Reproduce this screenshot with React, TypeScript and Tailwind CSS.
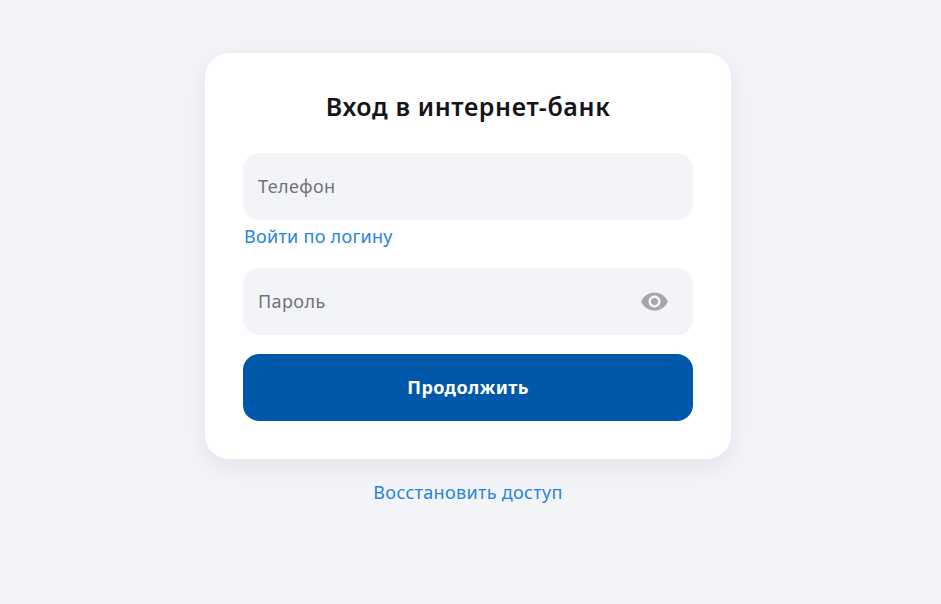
import { MdVisibility } from 'react-icons/md';

export default function App() {
  return (
    <div className="min-h-[604px] bg-[#f3f4f8] flex flex-col items-center pt-[53px] pr-[5px] font-['Noto_Sans',sans-serif]">
      <div className="w-[526px] bg-white rounded-[24px] px-[38px] pt-[36px] pb-[38px] shadow-[0_8px_24px_rgba(30,40,80,0.08)]">
        <h1 className="text-[25px] leading-[34px] tracking-[0.62px] font-semibold text-center text-[#14141a] mb-[30px]">
          Вход в интернет-банк
        </h1>
        <div className="h-[67px] bg-[#f3f4f8] rounded-[16px] flex items-center px-[15px] text-[18px] tracking-[0.4px] text-[#72727e]">
          Телефон
        </div>
        <a className="block mt-[4px] ml-[1px] text-[18px] leading-[24px] tracking-[0.28px] text-[#2485e0]">Войти по логину</a>
        <div className="mt-[20px] h-[67px] bg-[#f3f4f8] rounded-[16px] flex items-center justify-between pl-[15px] pr-[24px] text-[18px] tracking-[0.4px] text-[#72727e]">
          <span>Пароль</span>
          <MdVisibility className="w-[29px] h-[29px] -mt-[1px] text-[#a5a5ae]" />
        </div>
        <button className="mt-[19px] w-full h-[67px] bg-[#0058ab] rounded-[16px] text-white text-[18px] tracking-[0.4px] font-bold">
          Продолжить
        </button>
      </div>
      <a className="mt-[21px] text-[18px] leading-[24px] tracking-[0.32px] text-[#2485e0]">Восстановить доступ</a>
    </div>
  );
}
